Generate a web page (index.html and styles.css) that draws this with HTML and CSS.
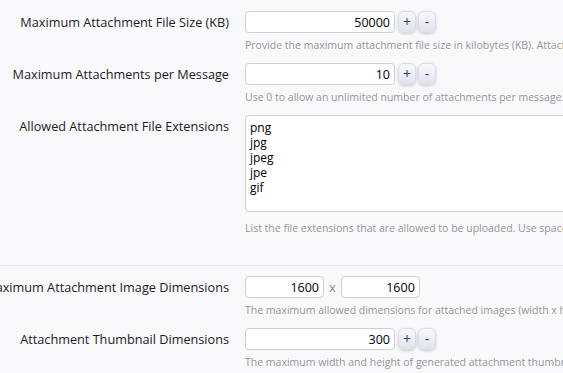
FILE: index.html
```html
<!DOCTYPE html>
<html>
<head>
<meta charset="utf-8">
<link rel="stylesheet" href="styles.css">
</head>
<body>
<div class="form">
  <div class="row row-first">
    <div class="label"><span>Maximum Attachment File Size (KB)</span></div>
    <div class="field">
      <div class="spinner">
        <input class="num" type="text" value="50000">
        <button class="btn">+</button>
        <button class="btn">-</button>
      </div>
      <p class="hint">Provide the maximum attachment file size in kilobytes (KB). Attachments larger than this will be rejected.</p>
    </div>
  </div>
  <div class="row">
    <div class="label"><span>Maximum Attachments per Message</span></div>
    <div class="field">
      <div class="spinner">
        <input class="num" type="text" value="10">
        <button class="btn">+</button>
        <button class="btn">-</button>
      </div>
      <p class="hint">Use 0 to allow an unlimited number of attachments per message.</p>
    </div>
  </div>
  <div class="row row-area">
    <div class="label"><span>Allowed Attachment File Extensions</span></div>
    <div class="field">
      <textarea class="area">png
jpg
jpeg
jpe
gif</textarea>
      <p class="hint hint-area">List the file extensions that are allowed to be uploaded. Use spaces or line breaks between extensions.</p>
    </div>
  </div>
  <hr class="sep">
  <div class="row">
    <div class="label"><span>Maximum Attachment Image Dimensions</span></div>
    <div class="field">
      <div class="dims">
        <input class="num small" type="text" value="1600">
        <span class="times">x</span>
        <input class="num small" type="text" value="1600">
      </div>
      <p class="hint">The maximum allowed dimensions for attached images (width x height). Use 0 for no limit.</p>
    </div>
  </div>
  <div class="row">
    <div class="label"><span>Attachment Thumbnail Dimensions</span></div>
    <div class="field">
      <div class="spinner">
        <input class="num" type="text" value="300">
        <button class="btn">+</button>
        <button class="btn">-</button>
      </div>
      <p class="hint">The maximum width and height of generated attachment thumbnails.</p>
    </div>
  </div>
</div>
</body>
</html>
```
FILE: styles.css
```css
html, body {
  margin: 0;
  padding: 0;
  background: #f9f9fc;
  overflow: hidden;
}
body {
  width: 563px;
  height: 373px;
  font-family: "Open Sans", "DejaVu Sans", sans-serif;
  color: #1c1c24;
}
.form {
  display: flex;
  flex-direction: column;
  padding-top: 11px;
}
.row {
  display: flex;
  align-items: flex-start;
  margin-bottom: 11px;
}
.row-area {
  margin-bottom: 0;
}
.label {
  width: 229px;
  flex: none;
  display: flex;
  justify-content: flex-end;
  margin-right: 16px;
  font-size: 12.7px;
  line-height: 22px;
  white-space: nowrap;
}
.label span {
  flex: none;
}
.field {
  flex: none;
  width: 600px;
}
.spinner, .dims {
  display: flex;
  align-items: center;
  height: 22px;
}
.num {
  box-sizing: border-box;
  width: 150px;
  height: 22px;
  margin: 0;
  padding: 0 4px;
  border: 1px solid #cfcfd4;
  border-radius: 4px;
  background: #fff;
  font-family: inherit;
  font-size: 12.5px;
  color: #000;
  text-align: right;
  outline: none;
}
.num.small {
  width: 79px;
}
.btn {
  box-sizing: border-box;
  width: 18px;
  height: 22px;
  margin: 0 0 0 3px;
  padding: 0;
  border: 1px solid #dcdce6;
  border-radius: 6px;
  background: linear-gradient(#f8f8fc, #e2e2ec);
  box-shadow: 0 1px 3px rgba(0,0,0,0.18);
  color: #2b4a6e;
  font-family: inherit;
  font-size: 14px;
  line-height: 18px;
}
.btn + .btn {
  margin-left: 2px;
}
.times {
  margin: 0 5px;
  font-size: 13px;
  color: #888;
}
.hint {
  margin: 5px 0 0;
  font-size: 10.5px;
  line-height: 14px;
  color: #969696;
  white-space: nowrap;
}
.hint-area {
  margin-top: 9px;
}
.area {
  display: block;
  box-sizing: border-box;
  width: 500px;
  height: 97px;
  margin: 0;
  padding: 4px 4px;
  border: 1px solid #cfcfd4;
  border-radius: 4px;
  background: #fff;
  font-family: inherit;
  font-size: 12px;
  line-height: 15px;
  color: #000;
  resize: none;
  outline: none;
}
.sep {
  border: 0;
  border-top: 1px solid #d7edfc;
  margin: 30px 0 10px;
  height: 0;
}
```
